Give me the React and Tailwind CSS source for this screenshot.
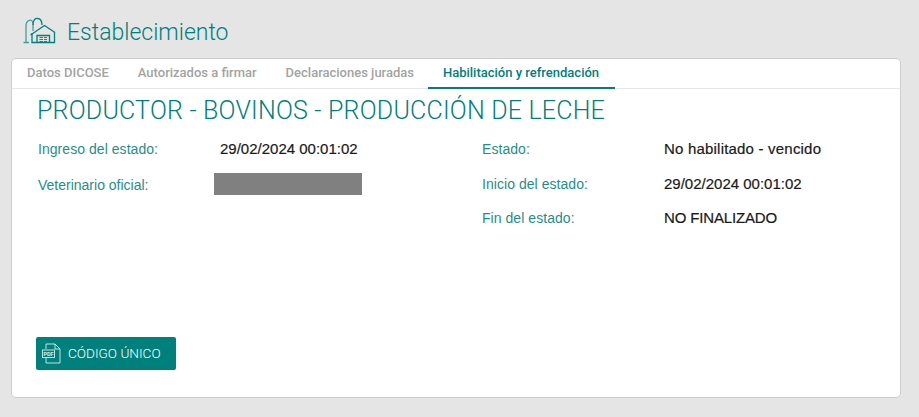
const teal = "text-[#00807c]";
const helv = "font-['Liberation_Sans',sans-serif]";

const BarnIcon = () => (
  <svg width="34" height="28" viewBox="0 0 34 28" fill="none" stroke="#00807c" strokeWidth="1.3" className="shrink-0">
    <path d="M0.5 25.5 H6 M3 25 V9 C3 3 9 1 10 6 V14" opacity="0.7" />
    <path d="M10 8 C10 2 13 1 15 1.5 C18 2 19 5 19 8" />
    <path d="M7.5 18 L21.5 8.5 L32 15.5" />
    <path d="M9 16 V25.5 H31.5 V15" />
    <path d="M14 25 V18.5 H26.5 V25" />
    <path d="M16.5 20.5 H20 M21 20.5 H24 M16.5 22.5 H20 M21 22.5 H24 M16.5 24.5 H20 M21 24.5 H24" strokeWidth="0.9" />
  </svg>
);

const PdfIcon = () => (
  <svg width="19" height="21" viewBox="0 0 19 21" fill="none" stroke="#d5eceb" strokeWidth="0.9" className="shrink-0">
    <path d="M4 6 V1 H13 L18 6 V20 H4 V15" />
    <path d="M13 1 V6 H18" />
    <rect x="0.5" y="7" width="12" height="7.5" fill="#00807c" />
    <text x="6.5" y="13" fontSize="5.5" fontWeight="700" textAnchor="middle" fill="#d5eceb" stroke="none">PDF</text>
  </svg>
);

const tabs = ["Datos DICOSE", "Autorizados a firmar", "Declaraciones juradas"];

const Row = ({ label, value, h = "h-[36px]", valueClass = "" }) => (
  <div className={`flex items-center ${h}`}>
    <span className={`w-[182px] text-[14px] tracking-[0.05px] text-[#1f8e8b] ${helv}`}>{label}</span>
    <span className={`text-[15px] text-[#1a1a1a] [-webkit-text-stroke:0.2px_#1a1a1a] ${helv} ${valueClass}`}>{value}</span>
  </div>
);

export default function App() {
  return (
    <div className="h-[417px] w-[919px] overflow-hidden bg-[#e5e5e5] font-['Roboto',sans-serif]">
      <div className="flex h-[58px] items-start gap-[10px] pl-[23px] pt-[17px]">
        <BarnIcon />
        <h1 className={`mt-[1px] text-[23px] font-light leading-[30px] ${teal}`}>Establecimiento</h1>
      </div>
      <div className="mx-[11px] h-[340px] w-[890px] rounded-[5px] border border-[#cfcfcf] bg-white">
        <div className="flex h-[30px] border-b border-[#e6e6e6] pl-[0.5px]">
          {tabs.map((t) => (
            <div key={t} className="px-[14.5px] pt-[6px] text-[13px] font-medium leading-[16px] text-[#a3a3a3]">
              {t}
            </div>
          ))}
          <div className={`-ml-[1px] h-[30px] w-[187px] border-b-2 border-[#00807c] pt-[6px] text-center text-[13px] font-medium leading-[16px] ${teal}`}>
            Habilitación y refrendación
          </div>
        </div>
        <div className="flex h-[309px] flex-col pl-[25px]">
          <h2 className={`mt-[8px] text-[25px] font-light leading-[28px] tracking-[0.2px] ${teal}`}>
            PRODUCTOR - BOVINOS - PRODUCCIÓN DE LECHE
          </h2>
          <div className="mt-[6px] flex">
            <div className="w-[445px] pl-[1px]">
              <Row label="Ingreso del estado:" value="29/02/2024 00:01:02" />
              <div className="flex h-[35px] items-center">
                <span className={`w-[176px] pt-[2px] text-[14px] text-[#1f8e8b] ${helv}`}>Veterinario oficial:</span>
                <div className="-mt-[2px] h-[22px] w-[148px] bg-[#808080]" />
              </div>
            </div>
            <div>
              <Row label="Estado:" value="No habilitado - vencido" valueClass="tracking-[0.2px]" />
              <Row label="Inicio del estado:" value="29/02/2024 00:01:02" h="h-[35px]" />
              <Row label="Fin del estado:" value="NO FINALIZADO" h="h-[32px]" valueClass="tracking-[-0.15px]" />
            </div>
          </div>
          <div className="mt-auto mb-[28px] -ml-[1px]">
            <button className="flex h-[33px] w-[140px] items-center gap-[7px] rounded-[2px] bg-[#00807c] pl-[6px] text-[13.6px] font-light text-white">
              <PdfIcon />
              CÓDIGO ÚNICO
            </button>
          </div>
        </div>
      </div>
    </div>
  );
}
